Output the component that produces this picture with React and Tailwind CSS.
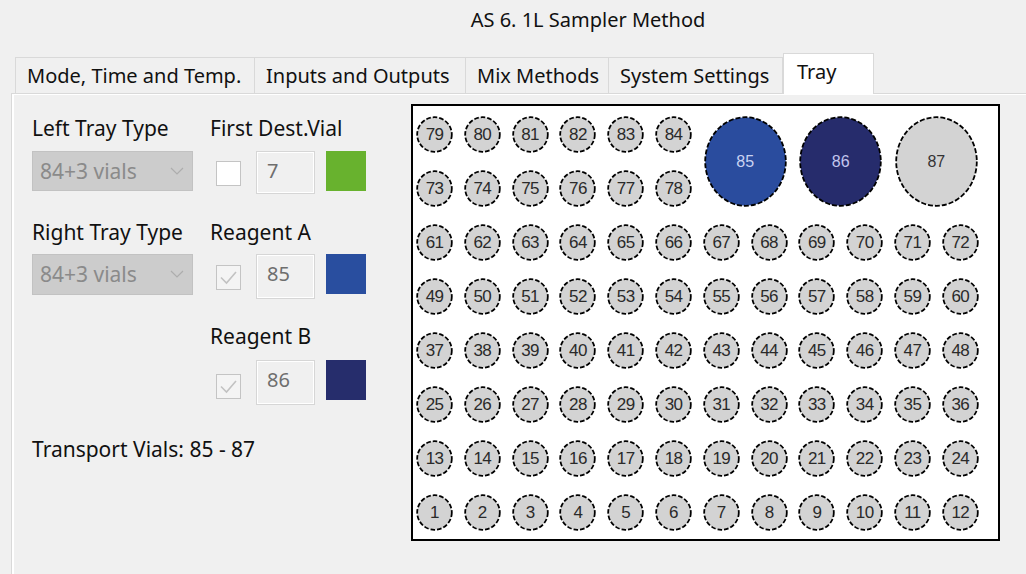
import React from "react";

const FONT = { fontFamily: '"Noto Sans", "Open Sans", sans-serif' };
const NUMFONT = { fontFamily: '"Liberation Sans", Arial, sans-serif' };

const rows = [
  [79, 80, 81, 82, 83, 84],
  [73, 74, 75, 76, 77, 78],
  [61, 62, 63, 64, 65, 66, 67, 68, 69, 70, 71, 72],
  [49, 50, 51, 52, 53, 54, 55, 56, 57, 58, 59, 60],
  [37, 38, 39, 40, 41, 42, 43, 44, 45, 46, 47, 48],
  [25, 26, 27, 28, 29, 30, 31, 32, 33, 34, 35, 36],
  [13, 14, 15, 16, 17, 18, 19, 20, 21, 22, 23, 24],
  [1, 2, 3, 4, 5, 6, 7, 8, 9, 10, 11, 12],
];

function Vial({ n }) {
  return (
    <div className="relative w-[37px] h-[37px] flex items-center justify-center">
      <svg className="absolute inset-0" width="37" height="37" viewBox="0 0 37 37">
        <circle cx="18.5" cy="18.5" r="17.3" fill="#d3d3d3" stroke="#000" strokeWidth="1.8" strokeDasharray="4.6 2" />
      </svg>
      <span className="relative text-[17px] leading-none text-[#2a2a2a] tracking-[-0.6px]" style={NUMFONT}>
        {n}
      </span>
    </div>
  );
}

function BigVial({ n, fill, text }) {
  return (
    <div className="col-span-2 row-span-2 flex items-center justify-center">
      <div className="relative w-[83px] h-[91px] flex items-center justify-center">
        <svg className="absolute inset-0" width="83" height="91" viewBox="0 0 83 91">
          <ellipse cx="41.5" cy="45.5" rx="40.3" ry="44.3" fill={fill} stroke="#000" strokeWidth="1.8" strokeDasharray="5 2" />
        </svg>
        <span className={`relative text-[16px] leading-none ${text}`} style={NUMFONT}>
          {n}
        </span>
      </div>
    </div>
  );
}

function Check({ checked, white }) {
  return (
    <div
      className={`w-[25px] h-[25px] border border-[#c4c4c4] flex items-center justify-center ${
        white ? "bg-white" : "bg-[#f4f4f4]"
      }`}
    >
      {checked && (
        <svg width="19" height="15" viewBox="0 0 19 15">
          <path d="M2 7.5 L7.5 13 L17 2" fill="none" stroke="#c2c2c2" strokeWidth="1.6" />
        </svg>
      )}
    </div>
  );
}

function TextBox({ value, h }) {
  return (
    <div className={`ml-[15px] w-[59px] ${h} border border-[#d6d6d6] bg-[#f0f0f0] outline outline-1 outline-white -outline-offset-2 flex items-start pt-[6px] pl-[10px]`}>
      <span className="text-[20px] leading-[26px] text-[#6e6e6e]">{value}</span>
    </div>
  );
}

function Combo({ h }) {
  return (
    <div className={`w-[161px] ${h} bg-[#cccccc] border border-[#c2c2c2] flex items-center justify-between pl-[7px] pr-[8px]`}>
      <span className="text-[21px] text-[#8a8a8a] leading-none">84+3 vials</span>
      <svg width="14" height="9" viewBox="0 0 14 9">
        <path d="M1 1 L7 7 L13 1" fill="none" stroke="#adadad" strokeWidth="1.2" />
      </svg>
    </div>
  );
}

function Swatch({ color }) {
  return <div className={`ml-[11px] w-[40px] h-[40px] ${color}`} />;
}

export default function App() {
  const tabs = [
    { label: "Mode, Time and Temp.", w: "w-[239px]" },
    { label: "Inputs and Outputs", w: "w-[211px]" },
    { label: "Mix Methods", w: "w-[143px]" },
    { label: "System Settings", w: "w-[175px]" },
  ];
  return (
    <div className="w-[1026px] h-[574px] bg-[#f0f0f0] overflow-hidden text-[#111]" style={FONT}>
      {/* Title */}
      <div className="h-[40px] pl-[150px] flex items-center justify-center">
        <span className="text-[20px] leading-none text-[#111]">AS 6. 1L Sampler Method</span>
      </div>

      {/* Tabs */}
      <div className="mt-[13px] pl-[15px] flex items-end h-[40px]">
        {tabs.map((t, i) => (
          <div
            key={t.label}
            className={`${t.w} h-[36px] border-t border-l ${i === 3 ? "border-r" : ""} border-[#d9d9d9] bg-[#f0f0f0] flex items-center pl-[11px] whitespace-nowrap`}
          >
            <span className="text-[20px] leading-none">{t.label}</span>
          </div>
        ))}
        <div className="relative z-10 w-[91px] h-[41px] -mb-px bg-white border-t border-l border-r border-[#d9d9d9] flex items-start pt-[8px] pl-[13px]">
          <span className="text-[20px] leading-none">Tray</span>
        </div>
      </div>

      {/* Panel */}
      <div className="ml-[11px] h-[500px] border-t border-l border-[#d9d9d9]">
        <div className="h-full border-t border-l-2 border-white flex pt-[9px]">
          {/* Left column */}
          <div className="w-[397px] pl-[18px] pt-[13px] flex flex-col">
            <div className="h-[24px] flex items-center text-[21px]">
              <span className="w-[178px]">Left Tray Type</span>
              <span>First Dest.Vial</span>
            </div>
            <div className="mt-[10px] flex items-start">
              <Combo h="h-[40px]" />
              <div className="ml-[23px] mt-[10px]">
                <Check white />
              </div>
              <TextBox value="7" h="h-[43px]" />
              <Swatch color="bg-[#68b22e]" />
            </div>

            <div className="mt-[27px] h-[24px] flex items-center text-[21px]">
              <span className="w-[178px]">Right Tray Type</span>
              <span>Reagent A</span>
            </div>
            <div className="mt-[9px] flex items-start">
              <Combo h="h-[41px]" />
              <div className="ml-[23px] mt-[11px]">
                <Check checked />
              </div>
              <TextBox value="85" h="h-[45px]" />
              <Swatch color="bg-[#294e9f]" />
            </div>

            <div className="mt-[26px] h-[24px] flex items-center text-[21px]">
              <span className="w-[178px]"></span>
              <span>Reagent B</span>
            </div>
            <div className="mt-[11px] flex items-start">
              <div className="w-[161px]" />
              <div className="ml-[23px] mt-[14px]">
                <Check checked />
              </div>
              <TextBox value="86" h="h-[45px]" />
              <Swatch color="bg-[#262d6c]" />
            </div>

            <div className="mt-[33px] h-[24px] flex items-center text-[21px]">
              <span>Transport Vials: 85 - 87</span>
            </div>
          </div>

          {/* Tray */}
          <div className="w-[589px] h-[437px] border-2 border-black bg-white pt-[10px] pl-[3px]">
            <div className="grid grid-cols-[repeat(12,37px)] grid-rows-[repeat(8,37px)] gap-x-[10.8px] gap-y-[17px]">
              {rows[0].map((n) => (
                <Vial key={n} n={n} />
              ))}
              <BigVial n={85} fill="#2a4c9e" text="text-[#c9d3f2]" />
              <BigVial n={86} fill="#262c6c" text="text-[#c2c6ee]" />
              <BigVial n={87} fill="#d3d3d3" text="text-[#333]" />
              {rows.slice(1).flat().map((n) => (
                <Vial key={n} n={n} />
              ))}
            </div>
          </div>
        </div>
      </div>
    </div>
  );
}
